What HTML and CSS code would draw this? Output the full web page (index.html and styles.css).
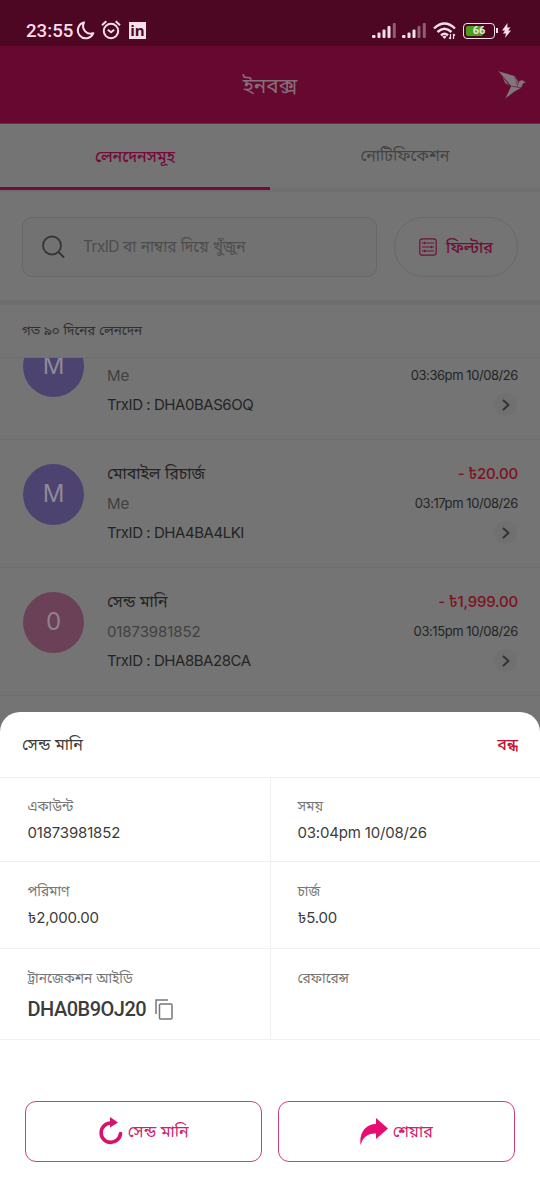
FILE: index.html
```html
<!DOCTYPE html>
<html lang="bn">
<head>
<meta charset="utf-8">
<title>ইনবক্স</title>
<link rel="stylesheet" href="styles.css">
</head>
<body>
<div class="screen">
  <div class="status">
    <span class="clock">23:55</span>
    <svg class="moon" width="19" height="19" viewBox="0 0 19 19"><path d="M8 1.5A8 8 0 1 0 17.3 12.2A7.6 7.6 0 0 1 8 1.500Z" fill="none" stroke="#f6dfea" stroke-width="2" stroke-linejoin="round"/></svg>
    <svg class="alarm" width="20" height="20" viewBox="0 0 20 20" fill="none" stroke="#f6dfea" stroke-width="2"><circle cx="10" cy="11" r="7.200"/><path d="M1 5.200L5.300 1.300M19 5.200L14.700 1.300M6.800 9.800L10 12.200L13.200 9.800"/></svg>
    <span class="linkedin">in</span>
    <svg class="signal" width="25" height="17" viewBox="0 0 25 17" fill="#f6dfea"><rect x="0" y="13" width="3.500" height="3" rx="1"/><rect x="5.500" y="10.500" width="3" height="5.500" rx="1"/><rect x="10.500" y="7.500" width="3" height="8.500" rx="1"/><rect x="15.500" y="4" width="3" height="12" rx="1"/><rect x="20.800" y="1" width="3" height="15" rx="1" opacity=".4"/></svg>
    <svg class="signal second" width="25" height="17" viewBox="0 0 25 17" fill="#f6dfea"><rect x="0" y="13" width="3.500" height="3" rx="1"/><rect x="5.500" y="10.500" width="3" height="5.500" rx="1"/><rect x="10.500" y="7.500" width="3" height="8.500" rx="1"/><rect x="15.500" y="4" width="3" height="12" rx="1" opacity=".4"/><rect x="20.800" y="1" width="3" height="15" rx="1" opacity=".4"/></svg>
    <svg class="wifi" width="24" height="18" viewBox="0 0 24 18" fill="none" stroke="#f6dfea" stroke-width="2.400"><path d="M1 6.500Q11.500-3.500 22 6.500M4.500 10Q11.500 3.500 18.500 10M8 13.300Q11.500 10 15 13.300"/><path d="M9.300 14.500L11.500 17L13.700 14.500Q11.500 12.800 9.300 14.500Z" fill="#f6dfea" stroke="none"/><path d="M17.500 12V17M16 15.500L17.500 17M20.500 17V12M22 13.500L20.500 12" stroke-width="1.200"/></svg>
    <span class="battery"><span class="level"></span><span class="percent">66</span></span>
    <span class="battery-tip"></span>
    <svg class="bolt" width="9" height="15" viewBox="0 0 9 15" fill="#f6dfea"><path d="M5.500 0L0 7.500H3L1 10.500H4L3 15L9 7.500H6L8.500 4.500H5.300Z"/></svg>
  </div>

  <header class="appbar">
    <h1>ইনবক্স</h1>
    <svg class="bird" width="28" height="28" viewBox="0 0 28 28"><g fill="#81767b" stroke="#66082f" stroke-width=".300"><path d="M0 0L17 5L20 16L13 15Z"/><path d="M4 5L12 15L7 12Z"/><path d="M16.500 5L20 10L20 16Z"/><path d="M19 16L21 10L24 9L26 10L28 12H25.500L23 17Z"/><path d="M13 15L23 17L16 21L7 28Z"/></g></svg>
  </header>

  <nav class="tabs">
    <a class="tab active">লেনদেনসমূহ</a>
    <a class="tab">নোটিফিকেশন</a>
  </nav>

  <div class="search-row">
    <div class="search">
      <svg width="25" height="25" viewBox="0 0 25 25" fill="none" stroke="#363636" stroke-width="1.900"><circle cx="11" cy="10.500" r="9"/><path d="M17.500 17L23 22.500"/></svg>
      <span><span class="tight">TrxID</span> বা নাম্বার দিয়ে খুঁজুন</span>
    </div>
    <div class="filter">
      <svg width="18" height="18" viewBox="0 0 18 18" fill="none" stroke="#6e1038" stroke-width="1.200"><rect x=".8" y=".8" width="16.400" height="16.400" rx="2.500"/><path d="M3 5H15M3 9H15M3 13H15M5.500 3.800V6.200M12.500 7.800V10.200M5.500 11.800V14.200"/></svg>
      <span>ফিল্টার</span>
    </div>
  </div>

  <div class="period">গত ৯০ দিনের লেনদেন</div>

  <div class="list">
    <div class="item">
      <span class="avatar violet">M</span>
      <div class="info"><b></b><span class="who">Me</span><span class="trx">TrxID : DHA0BAS6OQ</span></div>
      <div class="meta"><b></b><span class="date">03:36pm 10/08/26</span><span class="go"><svg width="8" height="12" viewBox="0 0 8 12"><path d="M1 1L6.500 6L1 11"/></svg></span></div>
    </div>
    <div class="item">
      <span class="avatar violet">M</span>
      <div class="info"><b>মোবাইল রিচার্জ</b><span class="who">Me</span><span class="trx">TrxID : DHA4BA4LKI</span></div>
      <div class="meta"><b>- ৳20.00</b><span class="date">03:17pm 10/08/26</span><span class="go"><svg width="8" height="12" viewBox="0 0 8 12"><path d="M1 1L6.500 6L1 11"/></svg></span></div>
    </div>
    <div class="item">
      <span class="avatar rose">0</span>
      <div class="info"><b>সেন্ড মানি</b><span class="who">01873981852</span><span class="trx">TrxID : DHA8BA28CA</span></div>
      <div class="meta"><b>- ৳1,999.00</b><span class="date">03:15pm 10/08/26</span><span class="go"><svg width="8" height="12" viewBox="0 0 8 12"><path d="M1 1L6.500 6L1 11"/></svg></span></div>
    </div>
  </div>

  <section class="sheet">
    <div class="sheet-head"><span>সেন্ড মানি</span><a class="close">বন্ধ</a></div>
    <div class="grid">
      <div class="cell"><span class="label">একাউন্ট</span><span class="value">01873981852</span></div>
      <div class="cell"><span class="label">সময়</span><span class="value">03:04pm 10/08/26</span></div>
      <div class="cell"><span class="label">পরিমাণ</span><span class="value">৳2,000.00</span></div>
      <div class="cell"><span class="label">চার্জ</span><span class="value">৳5.00</span></div>
      <div class="cell"><span class="label">ট্রানজেকশন আইডি</span><span class="value trx-id"><span>DHA0B9OJ20</span>
        <svg width="18" height="21" viewBox="0 0 18 21" fill="none" stroke="#777" stroke-width="1.500"><path d="M1 15V1H13"/><rect x="4.500" y="5" width="12.500" height="15" rx="1"/></svg></span></div>
      <div class="cell"><span class="label">রেফারেন্স</span></div>
    </div>
    <div class="actions">
      <a class="button"><svg width="25" height="28" viewBox="0 0 25 28"><path d="M13.500 6H12.500A9.700 9.700 0 1 0 22.500 16.500" fill="none" stroke="#d7136b" stroke-width="3.600" stroke-linecap="round"/><path d="M12 0L20 5.500L12 10.500Z" fill="#d7136b"/></svg><span>সেন্ড মানি</span></a>
      <a class="button share"><svg width="28" height="27" viewBox="0 0 28 27"><path d="M16 0L28 10.500L16 21V15.500C8 15 3 19 .5 27C-1 14 6 6 16 6Z" fill="#e60f6f"/></svg><span>শেয়ার</span></a>
    </div>
  </section>
</div>
</body>
</html>
```
FILE: styles.css
```css
* { box-sizing: border-box; }
body { margin: 0; background: #747474; }
svg { display: block; flex: none; }
.screen {
  width: 540px; height: 1200px; overflow: hidden;
  display: flex; flex-direction: column;
  background: #747474; color: #242424;
  font-family: Inter, "Noto Sans Bengali", "Noto Sans", sans-serif;
  white-space: nowrap;
}
.screen > * { flex: none; }
.tight { letter-spacing: -.6px; }

.status { height: 46px; background: #4d0723; display: flex; align-items: center; padding: 15px 29px 0 26px; color: #f6dfea; }
.clock { font: 500 18.7px/24px Roboto, sans-serif; width: 47px; }
.moon { margin: 0 0 1px 3px; }
.alarm { margin: 0 0 1px 6px; }
.linkedin { margin: 0 auto 1px 8px; width: 17px; height: 17px; background: #f6dfea; color: #4d0723; font: 700 15px/17px "Open Sans", sans-serif; text-align: center; }
.signal.second { margin-left: 5px; }
.wifi { margin-left: 6px; }
.battery { display: flex; align-items: center; position: relative; margin-left: 6px; width: 32px; height: 16px; border: 1.5px solid #f6dfea; border-radius: 4px; padding: 1.5px; }
.level { width: 17px; height: 10px; background: #46a01a; border-radius: 2px; }
.percent { position: absolute; inset: 0; text-align: center; font: 700 11px/13px Roboto, sans-serif; }
.battery-tip { width: 2px; height: 5px; background: #f6dfea; margin-left: 1px; }
.bolt { margin-left: 4px; }

.appbar { height: 78px; background: #66082f; display: grid; grid-template-columns: 1fr auto 1fr; align-items: center; padding: 0 14px; border-bottom: 1px solid #6d2d48; }
.appbar h1 { grid-column: 2; margin: 0; padding-top: 5px; font-size: 20.8px; font-weight: 400; color: #85707a; }
.bird { justify-self: end; }

.tabs { height: 68px; display: flex; border-bottom: 4px solid #6f6f6f; }
.tab { flex: 1; height: 66px; display: flex; align-items: center; justify-content: center; font-size: 15.9px; color: #444; padding-bottom: 1px; }
.tab.active { color: #740b3a; font-weight: 500; border-bottom: 3px solid #740b3a; padding: 3px 0 0; }

.search-row { height: 113px; display: flex; gap: 17px; padding: 25px 22px 0; border-bottom: 5px solid #6e6e6e; }
.search { width: 355px; height: 60px; display: flex; align-items: center; gap: 17px; padding-left: 18px; border: 1.5px solid #676767; border-radius: 10px; background: #727272; color: #4d4d4d; font-size: 15.4px; }
.filter { width: 124px; height: 60px; display: flex; align-items: center; justify-content: center; gap: 9px; border: 1.5px solid #686868; border-radius: 30px; color: #6e1038; font-size: 16px; font-weight: 500; }
.filter span { padding-top: 2px; }
.period { height: 53px; padding-left: 22px; line-height: 51px; font-size: 13.4px; color: #303030; border-bottom: 1px solid #6d6d6d; }

.list { height: 354px; overflow: hidden; display: flex; flex-direction: column; justify-content: flex-end; padding-bottom: 16px; }
.item { flex: none; height: 128px; display: flex; padding: 24px 22px 0 23px; border-bottom: 1px solid #6d6d6d; }
.avatar { width: 61px; height: 61px; border-radius: 50%; font-size: 24px; line-height: 60px; text-align: center; color: #8e8996; }
.violet { background: #4c4370; }
.rose { background: #6b4157; color: #92808b; }
.info { flex: 1; margin-left: 23px; }
.info > *, .meta > * { display: block; height: 29px; line-height: 29px; font-size: 15px; }
.info > b { font-size: 15.9px; font-weight: 400; margin: -5px 0 1px; }
.info .who { color: #414141; letter-spacing: -.1px; }
.info .trx { letter-spacing: -.45px; }
.meta { text-align: right; }
.meta > b { color: #7c1220; font-weight: 500; margin: -5px 0 1px; letter-spacing: -.2px; }
.meta .date { font-size: 13px; letter-spacing: -.43px; }
.meta .go { margin: 3px 1px 0 auto; width: 23px; height: 23px; border-radius: 50%; background: #707070; display: grid; place-items: center; }
.go path { fill: none; stroke: #333; stroke-width: 2; }

.sheet { height: 488px; background: #fff; border-radius: 20px 20px 0 0; color: #3c3c3c; }
.sheet-head { height: 66px; display: flex; justify-content: space-between; align-items: center; padding: 2px 22px 0; border-bottom: 1px solid #efefef; font-size: 16px; }
.close { color: #c41230; font-weight: 500; }
.grid { display: grid; grid-template-columns: 270px 270px; grid-template-rows: 84px 87px 91px; }
.cell { padding: 16px 0 0 27.5px; border-bottom: 1px solid #f0f0f0; display: flex; flex-direction: column; }
.cell:nth-child(even) { border-left: 1px solid #f0f0f0; padding-left: 26.5px; }
.cell:nth-child(n+3) { padding-top: 17px; }
.label { height: 25px; line-height: 25px; font-size: 13.7px; color: #777; }
.value { height: 28px; line-height: 28px; font-size: 15px; letter-spacing: -.18px; }
.trx-id { display: flex; align-items: center; gap: 9px; height: 36px; font: 500 20px/36px Roboto, sans-serif; letter-spacing: -.5px; }
.actions { display: flex; gap: 16.500px; padding: 61px 25px 0; }
.button { width: 236.500px; height: 60.500px; display: flex; align-items: center; justify-content: center; gap: 5px; border: 1.5px solid #cf3f7e; border-radius: 11px; color: #cf226b; font-size: 16px; }
.button span { padding-top: 2px; }
```
